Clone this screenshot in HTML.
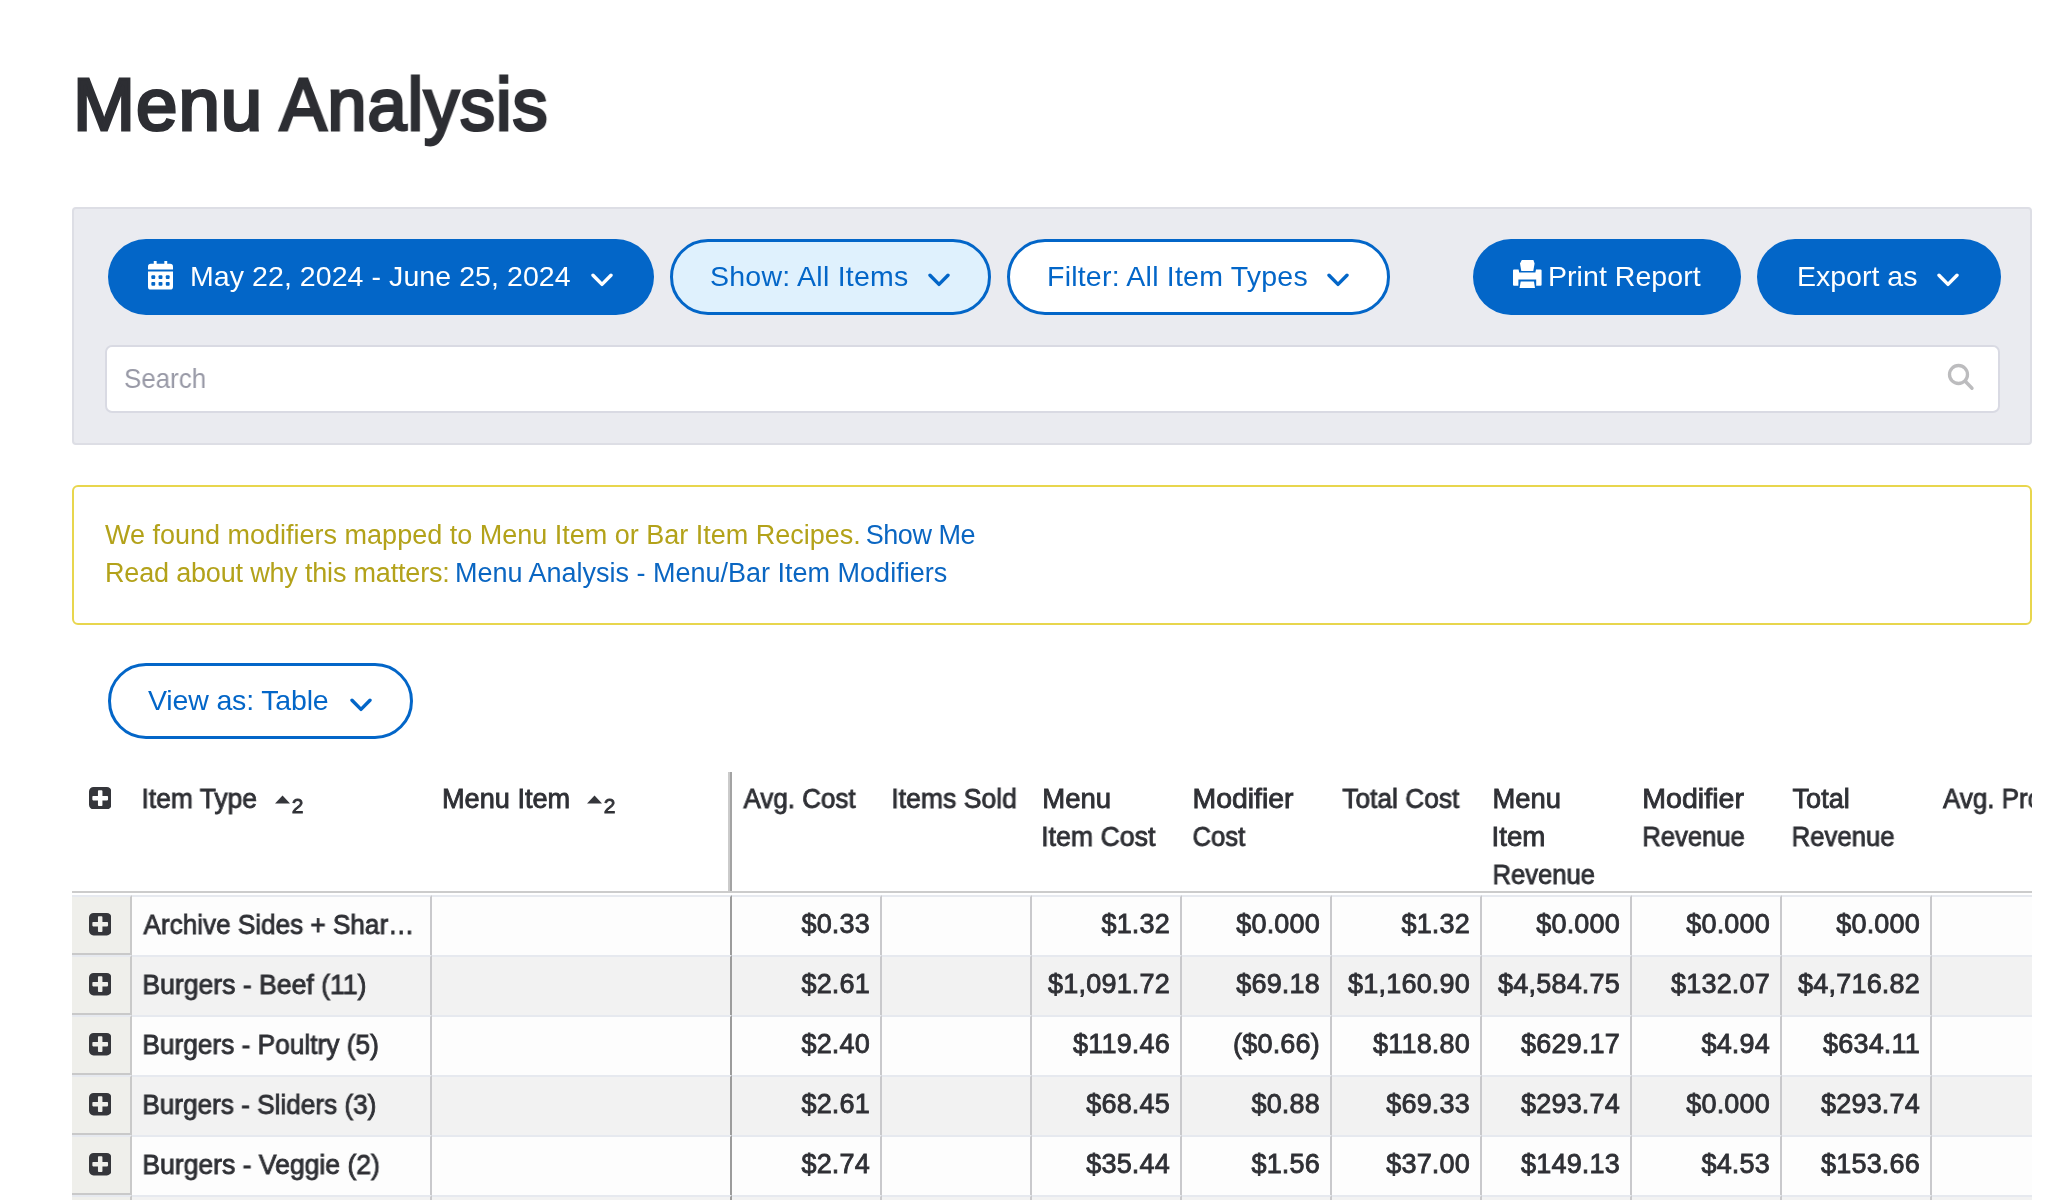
<!DOCTYPE html>
<html lang="en">
<head>
<meta charset="utf-8">
<title>Menu Analysis</title>
<style>
*{box-sizing:border-box;}
html,body{margin:0;padding:0;}
body{width:2070px;height:1200px;overflow:hidden;background:#fff;position:relative;
  font-family:"Liberation Sans",Arial,sans-serif;color:#2e3035;}
h1{position:absolute;left:72.700px;top:57px;margin:0;font-size:74px;line-height:96px;font-weight:normal;
  color:#2d2e33;-webkit-text-stroke:3px #2d2e33;letter-spacing:1px;white-space:nowrap;transform:scaleX(1);transform-origin:0 50%;will-change:transform;}
.panel{position:absolute;left:72px;top:207px;width:1960px;height:238px;background:#eaebf0;
  border:2px solid #dddee5;border-radius:4px;}
.btn{position:absolute;top:239px;height:76px;border-radius:38px;font-size:28.500px;line-height:76px;
  white-space:nowrap;padding:0;}
.btn span.t{position:absolute;top:-1px;}
.btn.solid{background:#0366c8;color:#fff;}
.btn.outline{background:#fff;color:#0366c8;border:3px solid #0366c8;line-height:70px;}
.btn.light{background:#dff1fd;}
.chev{position:absolute;}
h1,.btn .t,.alert div,.td,.th,.search span{will-change:transform;}
.search{position:absolute;left:105px;top:345px;width:1895px;height:68px;background:#fff;
  border:2px solid #d9dae3;border-radius:7px;}
.search span{position:absolute;left:17px;top:1px;line-height:62px;font-size:28px;color:#9899a6;transform:scaleX(.925);transform-origin:0 50%;will-change:transform;}
.alert{position:absolute;left:72px;top:485px;width:1960px;height:140px;border:2px solid #e8d64e;
  border-radius:6px;background:#fff;color:#b3a21a;font-size:27px;}
.alert div{position:absolute;left:31.300px;white-space:nowrap;line-height:38px;}
.alert a{color:#0a66c2;text-decoration:none;}

.tbl{position:absolute;left:72px;top:772px;width:1960px;height:428px;overflow:hidden;font-size:27px;font-weight:normal;-webkit-text-stroke:.85px #2f3035;color:#2f3035;}
.thead{display:flex;height:121px;width:2400px;border-bottom:2px solid #cccccc;background:#fff;}
.th{flex:none;height:119px;padding:7.500px 0 0 10px;line-height:38px;position:relative;white-space:nowrap;border-right:2px solid transparent;}
.th.frozen{border-right:2px solid #a3a3a3;box-shadow:inset -2px 0 0 #cbcbcb;}
.s{display:inline-block;transform-origin:0 50%;will-change:transform;}
.td.w150{letter-spacing:.2px;line-height:54.400px;}
.c0{width:60px;}
.w300{width:300px;}
.w150{width:150px;}
.th.c0{padding:0;}
.plus{position:absolute;left:17px;}
.th .plus{top:15px;}
.td .plus{top:16.400px;}
.sort{position:absolute;top:0;}
.sort svg{position:absolute;left:-.5px;top:22.500px;}
.sort .n{position:absolute;left:16.300px;top:23.500px;font-size:21px;line-height:20px;font-weight:normal;color:#35363b;}
.tr{display:flex;height:60px;width:2400px;}
.tr:nth-child(2){margin-top:2px;}
.td{flex:none;height:60px;border-top:2px solid #e6e9ef;border-right:2px solid #c9c9cc;background:#fdfdfd;
  line-height:56px;text-align:right;padding:0 10px 0 0;white-space:nowrap;position:relative;overflow:hidden;}
.tr.odd .td{background:#f2f2f2;}
.td.l{text-align:left;padding:0 0 0 10px;}
.td.c0,.tr.odd .td.c0{background:#efefeb;border-bottom:2px solid #c9c9c9;border-right:2px solid #c9c9c9;padding:0;}
.td.frozen{border-right:2px solid #9c9c9c;}
</style>
</head>
<body>
<h1><span class="s" style="transform:scaleX(1.006)">Menu</span> <span class="s" style="transform:translateX(-4.200px) scaleX(.948)">Analysis</span></h1>

<div class="panel"></div>

<div class="btn solid" id="b1" style="left:108px;width:546px;">
  <svg class="chev" style="left:39.800px;top:22.300px" width="25" height="28.500" viewBox="0 0 26 30" preserveAspectRatio="none"><path fill="#fff" d="M6 0h3v3h8V0h3v3h3a3 3 0 0 1 3 3v3H0V6a3 3 0 0 1 3-3h3zM0 11h26v16a3 3 0 0 1-3 3H3a3 3 0 0 1-3-3z"/><g fill="#0366c8"><rect x="3.5" y="15" width="4" height="4" rx="1"/><rect x="11" y="15" width="4" height="4" rx="1"/><rect x="18.5" y="15" width="4" height="4" rx="1"/><rect x="3.5" y="22" width="4" height="4" rx="1"/><rect x="11" y="22" width="4" height="4" rx="1"/><rect x="18.5" y="22" width="4" height="4" rx="1"/></g></svg>
  <span class="t" style="left:82px;letter-spacing:.07px">May 22, 2024 - June 25, 2024</span>
  <svg class="chev" style="left:483px;top:34px" width="22" height="15" viewBox="0 0 22 15"><path d="M2 2.200l9 9.200 9-9.200" fill="none" stroke="#fff" stroke-width="3.4" stroke-linecap="round" stroke-linejoin="round"/></svg>
</div>

<div class="btn outline light" id="b2" style="left:670px;width:321px;">
  <span class="t" style="left:37px;letter-spacing:.25px">Show: All Items</span>
  <svg class="chev" style="left:255px;top:31px" width="22" height="15" viewBox="0 0 22 15"><path d="M2 2.200l9 9.200 9-9.200" fill="none" stroke="#0366c8" stroke-width="3.4" stroke-linecap="round" stroke-linejoin="round"/></svg>
</div>

<div class="btn outline" id="b3" style="left:1007px;width:383px;">
  <span class="t" style="left:37px;letter-spacing:.22px">Filter: All Item Types</span>
  <svg class="chev" style="left:317px;top:31px" width="22" height="15" viewBox="0 0 22 15"><path d="M2 2.200l9 9.200 9-9.200" fill="none" stroke="#0366c8" stroke-width="3.4" stroke-linecap="round" stroke-linejoin="round"/></svg>
</div>

<div class="btn solid" id="b4" style="left:1473px;width:268px;">
  <svg class="chev" style="left:40.100px;top:20.900px" width="28.600" height="28.100" viewBox="0 0 28.600 28.100"><path fill="#fff" d="M8.800 0h11.600l1.200 3.500-1.300 7.500H8.300L7 3.500zM1 9.600h4.600l.6 2.800h16.200l.6-2.800h4.600a1 1 0 0 1 1 1v14.200a1 1 0 0 1-1 1h-4.400v-6.200H5.400v6.200H1a1 1 0 0 1-1-1V10.600a1 1 0 0 1 1-1zM7.700 21.600h13.300l1 6.500H6.500z"/></svg>
  <span class="t" style="left:75px;letter-spacing:.05px">Print Report</span>
</div>

<div class="btn solid" id="b5" style="left:1757px;width:244px;">
  <span class="t" style="left:40px;letter-spacing:0">Export as</span>
  <svg class="chev" style="left:180px;top:34px" width="22" height="15" viewBox="0 0 22 15"><path d="M2 2.200l9 9.200 9-9.200" fill="none" stroke="#fff" stroke-width="3.4" stroke-linecap="round" stroke-linejoin="round"/></svg>
</div>

<div class="search"><span>Search</span>
  <svg style="position:absolute;left:1840px;top:16px" width="30" height="30" viewBox="0 0 30 30"><circle cx="11.5" cy="11.5" r="9" fill="none" stroke="#bcbcbe" stroke-width="3.300"/><path d="M18 18l7 7.200" stroke="#bcbcbe" stroke-width="3.400" stroke-linecap="round"/></svg>
</div>

<div class="alert">
  <div style="top:29px"><span style="letter-spacing:0">We found modifiers mapped to Menu Item or Bar Item Recipes. </span><a style="letter-spacing:-.5px;margin-left:-2.500px">Show Me</a></div>
  <div style="top:67px"><span style="letter-spacing:-.18px">Read about why this matters: </span><a style="letter-spacing:0;margin-left:-2px">Menu Analysis - Menu/Bar Item Modifiers</a></div>
</div>

<div class="btn outline" id="b6" style="left:108px;top:663px;width:305px;">
  <span class="t" style="left:37px;letter-spacing:-.16px">View as: Table</span>
  <svg class="chev" style="left:239px;top:31.500px" width="22" height="15" viewBox="0 0 22 15"><path d="M2 2.200l9 9.200 9-9.200" fill="none" stroke="#0366c8" stroke-width="3.4" stroke-linecap="round" stroke-linejoin="round"/></svg>
</div>

<!--TBL-START-->
<div class="tbl">
<div class="thead">
<div class="th c0"><svg class="plus" width="22.400" height="22.400" viewBox="0 0 22 22"><path fill="#35363b" fill-rule="evenodd" d="M4.500 0h13A4.500 4.500 0 0 1 22 4.500v13A4.500 4.500 0 0 1 17.500 22h-13A4.500 4.500 0 0 1 0 17.500v-13A4.500 4.500 0 0 1 4.500 0zM8.800 4.100a.8.800 0 0 1 .8-.8h2.800a.8.800 0 0 1 .8.800v4.700h4.700a.8.800 0 0 1 .8.800v2.800a.8.800 0 0 1-.8.800h-4.700v4.700a.8.800 0 0 1-.8.800h-2.800a.8.800 0 0 1-.8-.8v-4.700h-4.700a.8.800 0 0 1-.8-.8v-2.800a.8.800 0 0 1 .8-.8h4.700z"/></svg></div>
<div class="th w300"><span class="s" style="transform:translateX(-0.5px) scaleX(0.9784)">Item Type</span><span class="sort" style="left:143.5px"><svg width="15" height="9" viewBox="0 0 15 9"><path fill="#35363b" d="M7.500 0.500L15 8.500H0z"/></svg><span class="n">2</span></span></div>
<div class="th w300 frozen"><span class="s" style="transform:translateX(0.0px) scaleX(1.0048)">Menu Item</span><span class="sort" style="left:155.5px"><svg width="15" height="9" viewBox="0 0 15 9"><path fill="#35363b" d="M7.500 0.500L15 8.500H0z"/></svg><span class="n">2</span></span></div>
<div class="th w150"><span class="s" style="transform:translateX(1.5px) scaleX(0.9619)">Avg. Cost</span></div>
<div class="th w150"><span class="s" style="transform:translateX(-0.7px) scaleX(0.9848)">Items Sold</span></div>
<div class="th w150"><span class="s" style="transform:translateX(0.2px) scaleX(1.02)">Menu</span><br><span class="s" style="transform:translateX(-0.8px) scaleX(0.9886)">Item Cost</span></div>
<div class="th w150"><span class="s" style="transform:translateX(0.5px) scaleX(1.0526)">Modifier</span><br><span class="s" style="transform:translateX(0.5px) scaleX(0.9491)">Cost</span></div>
<div class="th w150"><span class="s" style="transform:translateX(0.3px) scaleX(0.9752)">Total Cost</span></div>
<div class="th w150"><span class="s" style="transform:translateX(0.5px) scaleX(1.0138)">Menu</span><br><span class="s" style="transform:translateX(-0.5px) scaleX(1.026)">Item</span><br><span class="s" style="transform:translateX(0.5px) scaleX(0.9486)">Revenue</span></div>
<div class="th w150"><span class="s" style="transform:translateX(0.3px) scaleX(1.0579)">Modifier</span><br><span class="s" style="transform:translateX(0.3px) scaleX(0.9486)">Revenue</span></div>
<div class="th w150"><span class="s" style="transform:translateX(0.6px) scaleX(1.0018)">Total</span><br><span class="s" style="transform:translateX(-0.4px) scaleX(0.9533)">Revenue</span></div>
<div class="th w150"><span class="s" style="transform:translateX(1.0px) scaleX(0.9619)">Avg. Profit</span></div>
</div>
<div class="tr">
<div class="td c0"><svg class="plus" width="22.400" height="22.400" viewBox="0 0 22 22"><path fill="#35363b" fill-rule="evenodd" d="M4.500 0h13A4.500 4.500 0 0 1 22 4.500v13A4.500 4.500 0 0 1 17.500 22h-13A4.500 4.500 0 0 1 0 17.500v-13A4.500 4.500 0 0 1 4.500 0zM8.800 4.100a.8.800 0 0 1 .8-.8h2.800a.8.800 0 0 1 .8.800v4.700h4.700a.8.800 0 0 1 .8.800v2.800a.8.800 0 0 1-.8.800h-4.700v4.700a.8.800 0 0 1-.8.800h-2.800a.8.800 0 0 1-.8-.8v-4.700h-4.700a.8.800 0 0 1-.8-.8v-2.800a.8.800 0 0 1 .8-.8h4.700z"/></svg></div>
<div class="td w300 l"><span class="s" style="transform:translateX(1.5px) scaleX(0.9676)">Archive Sides + Shar…</span></div>
<div class="td w300 frozen"></div>
<div class="td w150">$0.33</div>
<div class="td w150"></div>
<div class="td w150">$1.32</div>
<div class="td w150">$0.000</div>
<div class="td w150">$1.32</div>
<div class="td w150">$0.000</div>
<div class="td w150">$0.000</div>
<div class="td w150">$0.000</div>
<div class="td w150"></div>
</div>
<div class="tr odd">
<div class="td c0"><svg class="plus" width="22.400" height="22.400" viewBox="0 0 22 22"><path fill="#35363b" fill-rule="evenodd" d="M4.500 0h13A4.500 4.500 0 0 1 22 4.500v13A4.500 4.500 0 0 1 17.500 22h-13A4.500 4.500 0 0 1 0 17.500v-13A4.500 4.500 0 0 1 4.500 0zM8.800 4.100a.8.800 0 0 1 .8-.8h2.800a.8.800 0 0 1 .8.800v4.700h4.700a.8.800 0 0 1 .8.800v2.800a.8.800 0 0 1-.8.800h-4.700v4.700a.8.800 0 0 1-.8.800h-2.800a.8.800 0 0 1-.8-.8v-4.700h-4.700a.8.800 0 0 1-.8-.8v-2.800a.8.800 0 0 1 .8-.8h4.700z"/></svg></div>
<div class="td w300 l"><span class="s" style="transform:translateX(0.3px) scaleX(0.9854)">Burgers - Beef (11)</span></div>
<div class="td w300 frozen"></div>
<div class="td w150">$2.61</div>
<div class="td w150"></div>
<div class="td w150">$1,091.72</div>
<div class="td w150">$69.18</div>
<div class="td w150">$1,160.90</div>
<div class="td w150">$4,584.75</div>
<div class="td w150">$132.07</div>
<div class="td w150">$4,716.82</div>
<div class="td w150"></div>
</div>
<div class="tr">
<div class="td c0"><svg class="plus" width="22.400" height="22.400" viewBox="0 0 22 22"><path fill="#35363b" fill-rule="evenodd" d="M4.500 0h13A4.500 4.500 0 0 1 22 4.500v13A4.500 4.500 0 0 1 17.500 22h-13A4.500 4.500 0 0 1 0 17.500v-13A4.500 4.500 0 0 1 4.500 0zM8.800 4.100a.8.800 0 0 1 .8-.8h2.800a.8.800 0 0 1 .8.800v4.700h4.700a.8.800 0 0 1 .8.800v2.800a.8.800 0 0 1-.8.800h-4.700v4.700a.8.800 0 0 1-.8.800h-2.800a.8.800 0 0 1-.8-.8v-4.700h-4.700a.8.800 0 0 1-.8-.8v-2.800a.8.800 0 0 1 .8-.8h4.700z"/></svg></div>
<div class="td w300 l"><span class="s" style="transform:translateX(0.3px) scaleX(0.9734)">Burgers - Poultry (5)</span></div>
<div class="td w300 frozen"></div>
<div class="td w150">$2.40</div>
<div class="td w150"></div>
<div class="td w150">$119.46</div>
<div class="td w150">($0.66)</div>
<div class="td w150">$118.80</div>
<div class="td w150">$629.17</div>
<div class="td w150">$4.94</div>
<div class="td w150">$634.11</div>
<div class="td w150"></div>
</div>
<div class="tr odd">
<div class="td c0"><svg class="plus" width="22.400" height="22.400" viewBox="0 0 22 22"><path fill="#35363b" fill-rule="evenodd" d="M4.500 0h13A4.500 4.500 0 0 1 22 4.500v13A4.500 4.500 0 0 1 17.500 22h-13A4.500 4.500 0 0 1 0 17.500v-13A4.500 4.500 0 0 1 4.500 0zM8.800 4.100a.8.800 0 0 1 .8-.8h2.800a.8.800 0 0 1 .8.800v4.700h4.700a.8.800 0 0 1 .8.800v2.800a.8.800 0 0 1-.8.800h-4.700v4.700a.8.800 0 0 1-.8.800h-2.800a.8.800 0 0 1-.8-.8v-4.700h-4.700a.8.800 0 0 1-.8-.8v-2.800a.8.800 0 0 1 .8-.8h4.700z"/></svg></div>
<div class="td w300 l"><span class="s" style="transform:translateX(0.3px) scaleX(0.9692)">Burgers - Sliders (3)</span></div>
<div class="td w300 frozen"></div>
<div class="td w150">$2.61</div>
<div class="td w150"></div>
<div class="td w150">$68.45</div>
<div class="td w150">$0.88</div>
<div class="td w150">$69.33</div>
<div class="td w150">$293.74</div>
<div class="td w150">$0.000</div>
<div class="td w150">$293.74</div>
<div class="td w150"></div>
</div>
<div class="tr">
<div class="td c0"><svg class="plus" width="22.400" height="22.400" viewBox="0 0 22 22"><path fill="#35363b" fill-rule="evenodd" d="M4.500 0h13A4.500 4.500 0 0 1 22 4.500v13A4.500 4.500 0 0 1 17.500 22h-13A4.500 4.500 0 0 1 0 17.500v-13A4.500 4.500 0 0 1 4.500 0zM8.800 4.100a.8.800 0 0 1 .8-.8h2.800a.8.800 0 0 1 .8.800v4.700h4.700a.8.800 0 0 1 .8.800v2.800a.8.800 0 0 1-.8.800h-4.700v4.700a.8.800 0 0 1-.8.800h-2.800a.8.800 0 0 1-.8-.8v-4.700h-4.700a.8.800 0 0 1-.8-.8v-2.800a.8.800 0 0 1 .8-.8h4.700z"/></svg></div>
<div class="td w300 l"><span class="s" style="transform:translateX(0.3px) scaleX(0.9837)">Burgers - Veggie (2)</span></div>
<div class="td w300 frozen"></div>
<div class="td w150">$2.74</div>
<div class="td w150"></div>
<div class="td w150">$35.44</div>
<div class="td w150">$1.56</div>
<div class="td w150">$37.00</div>
<div class="td w150">$149.13</div>
<div class="td w150">$4.53</div>
<div class="td w150">$153.66</div>
<div class="td w150"></div>
</div>
<div class="tr odd">
<div class="td c0"><svg class="plus" width="22.400" height="22.400" viewBox="0 0 22 22"><path fill="#35363b" fill-rule="evenodd" d="M4.500 0h13A4.500 4.500 0 0 1 22 4.500v13A4.500 4.500 0 0 1 17.500 22h-13A4.500 4.500 0 0 1 0 17.500v-13A4.500 4.500 0 0 1 4.500 0zM8.800 4.100a.8.800 0 0 1 .8-.8h2.800a.8.800 0 0 1 .8.800v4.700h4.700a.8.800 0 0 1 .8.800v2.800a.8.800 0 0 1-.8.800h-4.700v4.700a.8.800 0 0 1-.8.800h-2.800a.8.800 0 0 1-.8-.8v-4.700h-4.700a.8.800 0 0 1-.8-.8v-2.800a.8.800 0 0 1 .8-.8h4.700z"/></svg></div>
<div class="td w300 l"></div>
<div class="td w300 frozen"></div>
<div class="td w150"></div>
<div class="td w150"></div>
<div class="td w150"></div>
<div class="td w150"></div>
<div class="td w150"></div>
<div class="td w150"></div>
<div class="td w150"></div>
<div class="td w150"></div>
<div class="td w150"></div>
</div>
</div>
<!--TBL-END-->
</body>
</html>
